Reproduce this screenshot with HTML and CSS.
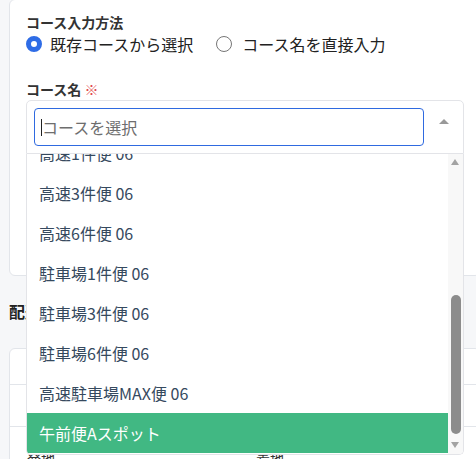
FILE: index.html
```html
<!DOCTYPE html>
<html lang="ja">
  <head>
    <meta charset="UTF-8" />
    <meta name="viewport" content="width=device-width, initial-scale=1.0" />
    <title>コース登録</title>
    <link rel="stylesheet" href="styles.css">
  </head>
  <body>
    <div class="page">
      <section class="card">
        <p class="label">コース入力方法</p>
        <div class="radios">
          <label class="radio"><span class="dot checked"></span>既存コースから選択</label>
          <label class="radio"><span class="dot"></span>コース名を直接入力</label>
        </div>

        <p class="label label-name">コース名 <span class="req">※</span></p>
        <div class="select">
          <div class="control">
            <div class="search">
              <span class="cursor"></span><span class="placeholder">コースを選択</span>
            </div>
            <div class="toggle"><span class="arrow"></span></div>
          </div>

          <!-- open dropdown list -->
          <div class="dropdown">
            <ul class="options">
              <li>高速1件便 06</li>
              <li>高速3件便 06</li>
              <li>高速6件便 06</li>
              <li>駐車場1件便 06</li>
              <li>駐車場3件便 06</li>
              <li>駐車場6件便 06</li>
              <li>高速駐車場MAX便 06</li>
              <li class="highlight">午前便Aスポット</li>
            </ul>
            <div class="scrollbar">
              <span class="sb-up"></span>
              <span class="sb-thumb"></span>
              <span class="sb-down"></span>
            </div>
          </div>
        </div>
      </section>

      <h2 class="section-title">配送情報</h2>

      <section class="card card-table">
        <div class="row row-head">
          <span>便名</span><span>区分</span>
        </div>
        <div class="row row-mid">
          <span>午前便</span><span>スポット</span>
        </div>
        <div class="row row-places">
          <span>発地</span><span>着地</span>
        </div>
      </section>
    </div>
  </body>
</html>
```

FILE: styles.css
```css
body {
    margin: 0;
    background: #f6f7f9;
    font-family: "Noto Sans CJK JP", "Noto Sans", sans-serif;
    color: #222;
    overflow: hidden;
}
.page {
    width: 472px;
    padding-left: 9px;
}
.card {
    background: #fff;
    border: 1px solid #e2e5ea;
    border-radius: 6px;
    margin-top: -1px;
    padding: 12px 16px 121px;
}
.label {
    margin: 0;
    font-size: 14px;
    line-height: 20px;
    font-weight: bold;
    color: #333;
}
.label-name {
    margin-top: 24px;
    margin-bottom: 1px;
}
.req {
    color: #e2474b;
    font-weight: normal;
}
.radios {
    display: flex;
    margin-top: 1px;
    height: 22px;
    align-items: center;
}
.radio {
    display: flex;
    align-items: center;
    font-size: 16px;
    line-height: 22px;
    color: #222;
}
.radio + .radio {
    margin-left: 23px;
}
.dot {
    box-sizing: border-box;
    width: 16px;
    height: 16px;
    border: 1px solid #767676;
    border-radius: 50%;
    margin-right: 8px;
    background: #fff;
}
.radio + .radio .dot {
    margin-right: 10px;
}
.dot.checked {
    border: 5px solid #2e6ce6;
}

/* select box */
.select {
    position: relative;
}
.control {
    box-sizing: border-box;
    height: 54px;
    display: flex;
    padding: 7px 0 0 7px;
    border: 1px solid #e3e4e8;
    border-radius: 5px 5px 0 0;
    background: #fff;
}
.search {
    box-sizing: border-box;
    width: 390px;
    height: 38px;
    border: 1px solid #2f6ae0;
    border-radius: 4px;
    display: flex;
    align-items: center;
    padding-left: 6px;
    font-size: 16px;
}
.cursor {
    width: 1px;
    height: 17px;
    background: #222;
}
.placeholder {
    color: #6e6e6e;
}
.toggle {
    flex: 1;
    display: flex;
    justify-content: center;
    padding-top: 11px;
}
.arrow {
    width: 0;
    height: 0;
    border-left: 5px solid transparent;
    border-right: 5px solid transparent;
    border-bottom: 5px solid #999;
}
.dropdown {
    position: absolute;
    top: 54px;
    left: 0;
    right: 0;
    height: 300px;
    display: flex;
    background: #fff;
    border: 1px solid #e3e4e8;
    border-top: none;
    border-radius: 0 0 5px 5px;
    overflow: hidden;
    z-index: 10;
}
.options {
    flex: 1;
    list-style: none;
    margin: -21px 0 0;
    padding: 0;
}
.options li {
    height: 40px;
    line-height: 40px;
    padding-left: 12px;
    font-size: 16px;
    color: #35495e;
    white-space: nowrap;
}
.options li.highlight {
    background: #41b883;
    color: #fff;
}
.scrollbar {
    width: 15px;
    background: #f8f8f8;
    position: relative;
}
.sb-up, .sb-down {
    position: absolute;
    left: 3px;
    width: 0;
    height: 0;
    border-left: 4.5px solid transparent;
    border-right: 4.5px solid transparent;
}
.sb-up {
    top: 5px;
    border-bottom: 6px solid #a3a3a3;
}
.sb-down {
    bottom: 6px;
    border-top: 6px solid #a3a3a3;
}
.sb-thumb {
    position: absolute;
    left: 3px;
    width: 10px;
    top: 141px;
    height: 139px;
    border-radius: 5px;
    background: #8c8c8c;
}

.section-title {
    margin: 23px 0 25px;
    font-size: 16px;
    line-height: 24px;
    font-weight: bold;
    color: #222;
}
.card-table {
    margin-top: 0;
    padding: 0;
    border-radius: 6px 6px 0 0;
}
.row {
    display: grid;
    grid-template-columns: 229px 1fr;
    padding-left: 17px;
    font-size: 14px;
    color: #333;
    border-bottom: 1px solid #e2e5ea;
}
.row-head {
    height: 35px;
    line-height: 35px;
}
.row-mid {
    height: 41px;
    line-height: 41px;
}
.row-places {
    border-bottom: none;
    padding-top: 21px;
    line-height: 20px;
}
```
